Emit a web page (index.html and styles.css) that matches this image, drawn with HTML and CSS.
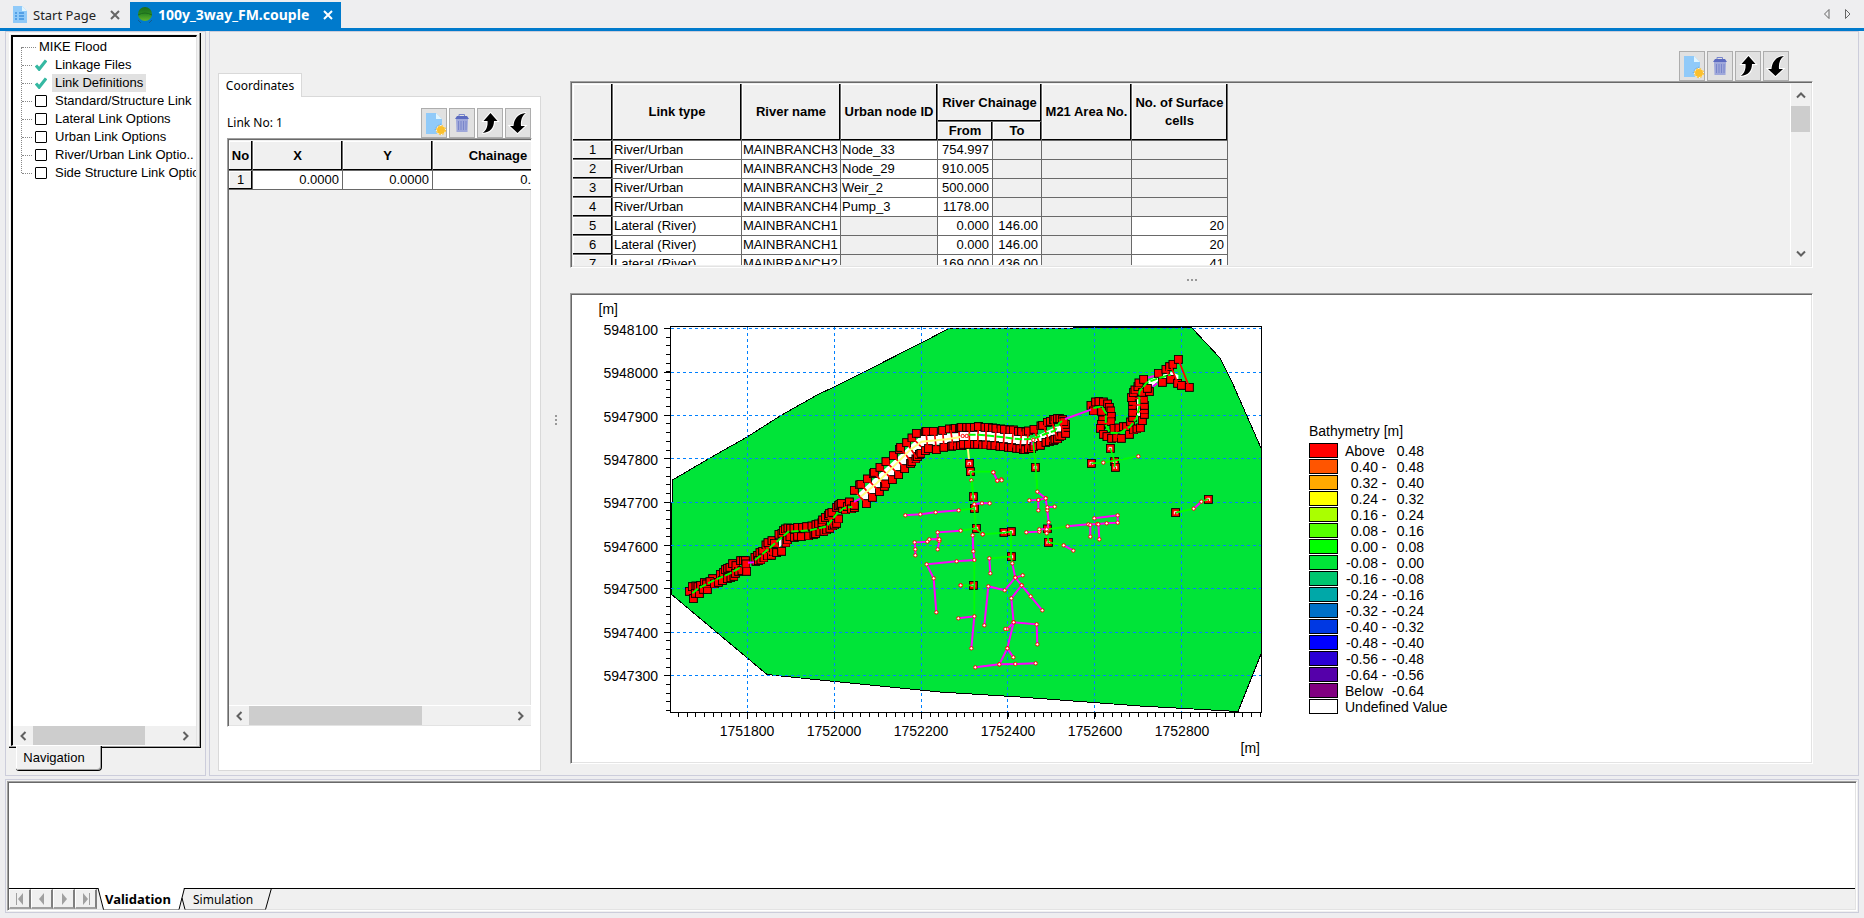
FILE: index.html
```html
<!DOCTYPE html>
<html lang="en">
<head>
<meta charset="utf-8">
<title>100y_3way_FM.couple</title>
<link rel="stylesheet" href="styles.css">
</head>
<body>
<svg class="sprites" aria-hidden="true">
  <symbol id="i-new" viewBox="1 1 24 28">
    <path d="M5 5H15L21 11V26H5Z" fill="#90caf9"/><path d="M15 5L21 11H15Z" fill="#e1f5fe"/>
    <circle cx="20" cy="22" r="5" fill="#fff" stroke="#cfd8dc" stroke-dasharray="1 1"/>
    <circle cx="20" cy="22" r="4" fill="#fbc02d"/><circle cx="20" cy="22" r="4.6" fill="none" stroke="#fbc02d" stroke-dasharray="2 1.6"/>
    <path d="M14 22l2-4 4-2" fill="none" stroke="#64a5dc" stroke-dasharray="1 1"/>
  </symbol>
  <symbol id="i-bin" viewBox="1 1 24 28">
    <path d="M10 8V6.500H15.500V8" fill="none" stroke="#7986cb"/><path d="M6 11L8 8H18L20 11Z" fill="#5c6bc0"/>
    <path d="M7 11H19L18.500 24H7.500Z" fill="#9fa8da"/><path d="M9.500 13V22M12 13V22M14.500 13V22M17 13V22" stroke="#7986cb"/>
  </symbol>
  <symbol id="i-up" viewBox="1 1 24 28">
    <path d="M13.500 5L20.500 13H17C17 19.500 13.500 24.500 5.500 25C9.500 22.500 11 18 10.500 13H6.500Z" stroke="#fff" stroke-width="2"/>
    <path d="M13.500 5L20.500 13H17C17 19.500 13.500 24.500 5.500 25C9.500 22.500 11 18 10.500 13H6.500Z"/>
  </symbol>
  <symbol id="i-down" viewBox="1 1 24 28">
    <path d="M12.500 25L20 18H16C15.500 12 17 7.500 21 5C13 5.500 9 11 8.500 18H5Z" stroke="#fff" stroke-width="2"/>
    <path d="M12.500 25L20 18H16C15.500 12 17 7.500 21 5C13 5.500 9 11 8.500 18H5Z"/>
  </symbol>
  <symbol id="i-check" viewBox="0 0 13 13"><path d="M1 7L4.500 11L12 1.500" fill="none" stroke="#35b8a2" stroke-width="3.500"/></symbol>
  <symbol id="i-x" viewBox="0 0 10 10"><path d="M1 1L9 9M9 1L1 9" fill="none" stroke="currentColor" stroke-width="2"/></symbol>
  <symbol id="a-left" viewBox="0 0 8 10"><path d="M6.500 1L2.500 5L6.500 9" fill="none" stroke="#606060" stroke-width="2"/></symbol>
  <symbol id="a-right" viewBox="0 0 8 10"><path d="M1.500 1L5.500 5L1.500 9" fill="none" stroke="#606060" stroke-width="2"/></symbol>
  <symbol id="a-up" viewBox="0 0 10 8"><path d="M1 6.500L5 2.500L9 6.500" fill="none" stroke="#606060" stroke-width="2"/></symbol>
  <symbol id="a-down" viewBox="0 0 10 8"><path d="M1 1.500L5 5.500L9 1.500" fill="none" stroke="#606060" stroke-width="2"/></symbol>
</svg>

<header class="doc-tabs">
  <div class="doc-tab">
    <svg class="doc-icon" viewBox="0 0 16 18"><path d="M1 0H10L15 5V17H1Z" fill="#90caf9"/><path d="M10 0V5H15Z" fill="#e1f5fe"/><path d="M3 7H5M3 10H5M3 13H5M7 7H12M7 10H12M7 13H12" stroke="#1976d2"/></svg>
    <button class="doc-name">Start Page</button>
    <button class="doc-close" aria-label="Close Start Page"><svg><use href="#i-x"/></svg></button>
  </div>
  <div class="doc-tab doc-tab-active">
    <svg class="doc-icon" viewBox="0 0 16 18"><defs><linearGradient id="ball" x2="0" y2="1"><stop offset="0" stop-color="#1d6b1c"/><stop offset=".5" stop-color="#2c8a22"/><stop offset="1" stop-color="#62b52c"/></linearGradient></defs><circle cx="8" cy="8" r="7" fill="url(#ball)"/><path d="M1 9Q8 5 15 9" stroke="#1c691d" fill="none"/><path d="M1 14L4 17M15 14L12 17" stroke="#155b8c"/></svg>
    <button class="doc-name">100y_3way_FM.couple</button>
    <button class="doc-close" aria-label="Close 100y_3way_FM.couple"><svg><use href="#i-x"/></svg></button>
  </div>
  <div class="doc-scroll">
    <button aria-label="Previous tab"><svg viewBox="0 0 8 12"><path d="M6 1.500V10.500L1.500 6Z"/></svg></button>
    <button aria-label="Next tab"><svg viewBox="0 0 8 12"><path d="M1.500 1.500V10.500L6 6Z"/></svg></button>
  </div>
</header>

<div class="workspace">
  <aside class="panel nav">
    <div class="nav-page">
      <div class="nav-box">
        <ul class="tree">
          <li class="tree-root">MIKE Flood</li>
          <li><svg class="check"><use href="#i-check"/></svg><span>Linkage Files</span></li>
          <li><svg class="check"><use href="#i-check"/></svg><span class="selected">Link Definitions</span></li>
          <li><input type="checkbox" id="c1"><label for="c1">Standard/Structure Link</label></li>
          <li><input type="checkbox" id="c2"><label for="c2">Lateral Link Options</label></li>
          <li><input type="checkbox" id="c3"><label for="c3">Urban Link Options</label></li>
          <li><input type="checkbox" id="c4"><label for="c4">River/Urban Link Optio..</label></li>
          <li><input type="checkbox" id="c5"><label for="c5">Side Structure Link Options</label></li>
        </ul>
        <div class="hscroll"><button aria-label="Scroll left"><svg><use href="#a-left"/></svg></button><div class="track"><div class="thumb nav-thumb"></div></div><button aria-label="Scroll right"><svg><use href="#a-right"/></svg></button></div>
      </div>
    </div>
    <button class="nav-tab">Navigation</button>
  </aside>

  <main class="panel editor">
    <section class="coords">
      <button class="coords-tab">Coordinates</button>
      <div class="coords-page">
        <div class="coords-head">
          <span>Link No: 1</span>
          <div class="tools">
            <button aria-label="New"><svg><use href="#i-new"/></svg></button><button aria-label="Delete"><svg><use href="#i-bin"/></svg></button><button aria-label="Move up"><svg><use href="#i-up"/></svg></button><button aria-label="Move down"><svg><use href="#i-down"/></svg></button>
          </div>
        </div>
        <div class="sunken coords-grid">
          <div class="clip">
            <table class="grid coords-table">
              <colgroup><col class="w24"><col class="w90"><col class="w90"><col class="w131"></colgroup>
              <thead><tr><th>No</th><th>X</th><th>Y</th><th>Chainage</th></tr></thead>
              <tbody><tr><th>1</th><td class="num">0.0000</td><td class="num">0.0000</td><td class="num">0.0000</td></tr></tbody>
            </table>
          </div>
          <div class="hscroll"><button aria-label="Scroll left"><svg><use href="#a-left"/></svg></button><div class="track"><div class="thumb coords-thumb"></div></div><button aria-label="Scroll right"><svg><use href="#a-right"/></svg></button></div>
        </div>
      </div>
    </section>

    <div class="vsplit"><i></i><i></i><i></i></div>

    <section class="links">
      <div class="tools links-tools">
        <button aria-label="New link"><svg><use href="#i-new"/></svg></button><button aria-label="Delete link"><svg><use href="#i-bin"/></svg></button><button aria-label="Move link up"><svg><use href="#i-up"/></svg></button><button aria-label="Move link down"><svg><use href="#i-down"/></svg></button>
      </div>
      <div class="sunken links-grid">
        <div class="clip">
          <table class="grid links-table">
            <colgroup><col class="w40"><col class="w129"><col class="w99"><col class="w97"><col class="w55"><col class="w49"><col class="w90"><col class="w96"></colgroup>
            <thead>
              <tr class="h-top"><th rowspan="2"></th><th rowspan="2">Link type</th><th rowspan="2">River name</th><th rowspan="2">Urban node ID</th><th colspan="2">River Chainage</th><th rowspan="2">M21 Area No.</th><th rowspan="2">No. of Surface<br>cells</th></tr>
              <tr class="h-sub"><th>From</th><th>To</th></tr>
            </thead>
            <tbody>
              <tr><th>1</th><td>River/Urban</td><td>MAINBRANCH3</td><td>Node_33</td><td class="num">754.997</td><td class="off"></td><td class="off"></td><td class="off"></td></tr>
              <tr><th>2</th><td>River/Urban</td><td>MAINBRANCH3</td><td>Node_29</td><td class="num">910.005</td><td class="off"></td><td class="off"></td><td class="off"></td></tr>
              <tr><th>3</th><td>River/Urban</td><td>MAINBRANCH3</td><td>Weir_2</td><td class="num">500.000</td><td class="off"></td><td class="off"></td><td class="off"></td></tr>
              <tr><th>4</th><td>River/Urban</td><td>MAINBRANCH4</td><td>Pump_3</td><td class="num">1178.00</td><td class="off"></td><td class="off"></td><td class="off"></td></tr>
              <tr><th>5</th><td>Lateral (River)</td><td>MAINBRANCH1</td><td class="off"></td><td class="num">0.000</td><td class="num">146.00</td><td class="off"></td><td class="num">20</td></tr>
              <tr><th>6</th><td>Lateral (River)</td><td>MAINBRANCH1</td><td class="off"></td><td class="num">0.000</td><td class="num">146.00</td><td class="off"></td><td class="num">20</td></tr>
              <tr><th>7</th><td>Lateral (River)</td><td>MAINBRANCH2</td><td class="off"></td><td class="num">169.000</td><td class="num">436.00</td><td class="off"></td><td class="num">41</td></tr>
            </tbody>
          </table>
        </div>
        <div class="vscroll"><button aria-label="Scroll up"><svg><use href="#a-up"/></svg></button><div class="track"><div class="thumb links-thumb"></div></div><button aria-label="Scroll down"><svg><use href="#a-down"/></svg></button></div>
      </div>
      <div class="hsplit"><i></i><i></i><i></i></div>
      <div class="sunken map">
        <svg class="plot" viewBox="572 295 700 466" role="img" aria-label="Bathymetry map">
          <defs>
            <marker id="sq" markerUnits="userSpaceOnUse" markerWidth="27" markerHeight="27" viewBox="-13.500 -13.500 27 27"><rect x="-12" y="-12" width="24" height="24" fill="#f00" stroke="#000" stroke-width="3"/></marker>
            <marker id="sqn" markerUnits="userSpaceOnUse" markerWidth="27" markerHeight="27" viewBox="-13.500 -13.500 27 27"><rect x="-12" y="-12" width="24" height="24" fill="#f00" stroke="#000" stroke-width="3"/><path d="M-4 5V-3H4V5" fill="none" stroke="#fff" stroke-width="3"/></marker>
            <marker id="nd" markerUnits="userSpaceOnUse" markerWidth="15" markerHeight="15" viewBox="-7.500 -7.500 15 15"><circle r="5" fill="#fff" stroke="#f00" stroke-width="3"/></marker>
          </defs>
          <path class="mesh" d="M672.500 480L710 458L747 437L780 416L817 395L834 387L862 373L921 343L949 328.500H1073V327H1187L1192 328L1220 358L1232 382L1261 448V654L1238 711.500L1140 706L1020 697L940 692L860 684L810 679L767 674.500L671 594V502H672.500Z"/>
          <path class="gridline" d="M671 328.500H1261M671 372.500H1261M671 415.500H1261M671 458.500H1261M671 502.500H1261M671 545.500H1261M671 588.500H1261M671 632.500H1261M671 675.500H1261M747.500 327V712M834.500 327V712M921.500 327V712M1007.500 327V712M1094.500 327V712M1181.500 327V712"/>
          <g transform="translate(660 310) scale(.33333)">
            <path class="water" d="M590 555L785 375L975 365V400L800 405L700 500L625 575ZM340 690L375 670L372 700L350 718Z"/>
            <path class="sq" d="M88 844L97 830L108 828L100 866L106 850L118 851L114 830L122 826L133 818L130 838L142 839L140 822L158 806L150 815L163 822L175 817L181 793L190 788L187 812L196 779L203 775L202 806L210 772L213 803L222 799L218 761L228 767L226 790L236 784L242 752L250 752L256 752L246 782L260 784L258 762L288 754L285 742L293 736L295 752L303 750L300 728L308 724L312 744L318 705L322 738L327 716L334 736L324 698L340 726L336 692L343 700L350 728L365 724L357 673L366 670L378 699L370 662L376 657L382 690L384 654L392 655L390 680L403 682L402 655L413 652L413 679L428 652L424 680L440 650L446 678L456 648L462 673L468 644L467 671L476 642L480 666L486 638L492 664L488 630L500 660L496 622L505 616L510 655L508 611L516 607L518 648L524 645L518 632L530 640L536 627L530 592L535 587L540 583L548 596L556 600L544 580L562 590L568 576L574 597L583 593L583 586"/>
            <path class="sq" d="M583 541L599 525L603 523L622 507L640 491L643 487L660 472L678 455L700 437L718 418L722 412L740 398L756 384L769 370L796 366L800 364L820 364L848 361L868 357L882 357L886 355L898 355L902 354L920 353L932 352L955 349M619 581L637 562L658 545L673 529L677 522L697 509L716 494L734 476L752 460L756 455L768 447L772 440L778 433L783 430L796 422L805 416L829 419L852 412L875 409L879 408L892 408L905 408L918 402L928 392L952 403"/>
            <path class="link" d="M583 541L619 581M603 523L637 562M622 507L658 545M643 490L677 527M660 472L697 509M678 455L716 494M700 437L734 476M722 414L755 457M740 398L770 443M758 384L783 410M798 364L803 416M823 364L829 419M848 361L852 412M872 360L879 408M896 356L901 408M918 353L928 392M953 349V403M310 715L335 735M340 690L356 712M225 765L236 784M505 620L515 650"/>
            <path class="river" d="M97 850L115 835L160 812L210 790L245 770M285 750L310 730L345 700L385 665L450 661L500 649L530 612L550 595L577 590"/>
            <path class="pipe" d="M264 758L282 757M582 576L600 566"/>
            <path class="cream" d="M602 560L650 520L700 470L750 420L785 395L860 388L920 378L928 460"/>
          </g>
          <g transform="translate(960 310) scale(.33333)">
            <path class="water" d="M0 360L150 365L215 385L300 345L315 365L215 405L0 395ZM560 215L590 200L635 186L655 195V212L600 208L575 230ZM524 265H546V310L520 340L500 358L490 350L522 320Z"/>
            <path class="pipe" d="M563 203L582 198M578 230L592 220"/>
            <path class="sq" d="M5 352L20 352L30 352L43 352L55 350L75 352L85 352L98 354L108 355L123 357L133 358L150 360L160 360L175 364L185 365L198 366L205 363L222 358L243 348L248 346L262 337L271 334L280 328L285 328L292 326L300 326L308 329M2 407L10 403L25 403L43 403L53 403L68 405L78 405L93 406L105 407L120 409L130 410L145 412L155 413L170 415L180 416L190 419L195 419L205 416L215 416L222 410L241 406L258 397L268 395L280 392L285 388L293 387L300 380L305 378L317 370L318 352L316 343L312 335"/>
            <path class="sq" d="M393 286L400 303L407 276L417 275L430 276L443 282L448 292L453 303L454 319L453 335L425 304L428 330L424 343L421 355L430 373L441 380L455 385L462 355L470 384L477 354L484 385L490 350L500 350L508 373L520 360L512 336L531 357L541 354L518 322L547 332L518 307L553 313L517 286L553 300L553 286L518 274L514 263L552 268L520 248L525 240L534 230L537 219L551 208L548 247L568 245L562 235L595 190L607 217L618 178L629 170L632 208L639 163L655 148L653 220L664 226L688 232"/>
            <path class="link" d="M28 352V403M55 350L53 403M78 352V405M108 355L105 407M133 358L130 410M160 360L155 413M185 365L180 416M205 363L200 416M222 358L241 406M250 346L268 395M275 334L293 387M298 326L310 370M655 148L688 232M632 166L653 220M618 178L632 208M432 320H462M430 340H455M515 265H552M518 285H553M518 305H553M470 355V384"/>
            <path class="river" d="M25 374H55L90 377L130 382L180 388L218 387L255 372L285 362L297 340L310 330M400 294L425 290L438 310L437 345L450 368L480 369L510 350L530 325L538 290V245L560 218L600 203L632 194"/>
            <path class="pipe" d="M315 327L393 299M217 392V405"/>
            <path class="sqn" d="M28 460L31 485L226 472L394 460L451 415L464 455L466 472"/>
            <path class="drain" d="M31 485H100M31 485L35 511L40 555M219 390L227 472L232 544M394 460L430 458L464 452L535 439M451 415L464 455V472"/>
            <path class="pipe" d="M100 487L112 512L124 508"/>
            <path class="nd" d="M8 378H20M220 390M100 487L112 512L124 508M34 511M430 458L535 439M100 487"/>
          </g>
          <g transform="translate(860 480) scale(.33333)">
            <path class="sqn" d="M340 50L343 85L349 145L432 157L454 155L454 230L340 316L562 147L565 187L947 98L1045 58"/>
            <path class="drain" d="M335 2L343 85L348 145L368 163L435 158L453 155V230L457 250M296 91L343 85M302 152L348 145M343 240V409M302 316H340M388 235L453 230M531 0L532 35M562 148L565 187L611 196M562 148L623 139M947 98L1001 86M1024 65L1045 57"/>
            <path class="pipe nd" d="M136 106L181 103L227 97L296 91"/>
            <path class="pipe nd" d="M343 73L366 70L389 70"/>
            <path class="pipe nd" d="M302 152L233 157V178L238 183L233 208"/>
            <path class="pipe nd" d="M238 178H208L202 185L164 187L166 208V226"/>
            <path class="pipe nd" d="M338 166L340 214L343 240L290 244L200 253L221 295L229 397"/>
            <path class="pipe nd" d="M334 505L343 409L295 415"/>
            <path class="pipe nd" d="M457 250L466 293L488 286"/>
            <path class="pipe nd" d="M466 293L434 331L385 319L373 436"/>
            <path class="pipe nd" d="M466 293L485 316L512 349L547 391"/>
            <path class="pipe nd" d="M485 316L454 355L461 427L530 433L532 493"/>
            <path class="pipe nd" d="M461 427L442 447H436"/>
            <path class="pipe nd" d="M461 427L442 505L418 553L346 562"/>
            <path class="pipe nd" d="M442 505L460 532"/>
            <path class="pipe nd" d="M418 553L466 552L527 550"/>
            <path class="pipe nd" d="M388 235L391 280"/>
            <path class="pipe nd" d="M532 35L557 55L562 91L566 127L560 160"/>
            <path class="pipe nd" d="M508 61L535 60L557 55"/>
            <path class="pipe nd" d="M535 60V91"/>
            <path class="pipe nd" d="M562 82L584 80"/>
            <path class="pipe nd" d="M499 157L538 155V148L560 148"/>
            <path class="pipe nd" d="M611 196L640 212"/>
            <path class="pipe nd" d="M623 139L685 133L712 132L740 130L773 128V106L703 115"/>
            <path class="pipe nd" d="M691 135V170"/>
            <path class="pipe nd" d="M715 133L718 178"/>
            <path class="pipe nd" d="M1001 86L1024 65"/>
            <path class="nd" d="M302 316L302 316M368 163L368 163M412 2L425 1"/>
          </g>
          <path class="axis" d="M670.500 326.500H1261.500V712.500H670.500ZM664 328.500H670M664 372.500H670M664 415.500H670M664 458.500H670M664 502.500H670M664 545.500H670M664 588.500H670M664 632.500H670M664 675.500H670M747.500 713V719M834.500 713V719M921.500 713V719M1007.500 713V719M1094.500 713V719M1181.500 713V719"/>
          <path class="ticks" d="M668 328V712"/>
          <path class="ticks" d="M678 715H1262"/>
          <g class="labels-y"><text x="658" y="335">5948100</text><text x="658" y="378">5948000</text><text x="658" y="422">5947900</text><text x="658" y="465">5947800</text><text x="658" y="508">5947700</text><text x="658" y="552">5947600</text><text x="658" y="594">5947500</text><text x="658" y="638">5947400</text><text x="658" y="681">5947300</text><text x="618" y="314">[m]</text><text x="1260" y="753">[m]</text></g>
          <g class="labels-x"><text x="747" y="736">1751800</text><text x="834" y="736">1752000</text><text x="921" y="736">1752200</text><text x="1008" y="736">1752400</text><text x="1095" y="736">1752600</text><text x="1182" y="736">1752800</text></g>
        </svg>
        <div class="legend">
          <h2>Bathymetry [m]</h2>
          <ul>
            <li><b class="k1"></b><span class="wide">Above</span><span>0.48</span></li>
            <li><b class="k2"></b><span>0.40</span><i>-</i><span>0.48</span></li>
            <li><b class="k3"></b><span>0.32</span><i>-</i><span>0.40</span></li>
            <li><b class="k4"></b><span>0.24</span><i>-</i><span>0.32</span></li>
            <li><b class="k5"></b><span>0.16</span><i>-</i><span>0.24</span></li>
            <li><b class="k6"></b><span>0.08</span><i>-</i><span>0.16</span></li>
            <li><b class="k7"></b><span>0.00</span><i>-</i><span>0.08</span></li>
            <li><b class="k8"></b><span>-0.08</span><i>-</i><span>0.00</span></li>
            <li><b class="k9"></b><span>-0.16</span><i>-</i><span>-0.08</span></li>
            <li><b class="k10"></b><span>-0.24</span><i>-</i><span>-0.16</span></li>
            <li><b class="k11"></b><span>-0.32</span><i>-</i><span>-0.24</span></li>
            <li><b class="k12"></b><span>-0.40</span><i>-</i><span>-0.32</span></li>
            <li><b class="k13"></b><span>-0.48</span><i>-</i><span>-0.40</span></li>
            <li><b class="k14"></b><span>-0.56</span><i>-</i><span>-0.48</span></li>
            <li><b class="k15"></b><span>-0.64</span><i>-</i><span>-0.56</span></li>
            <li><b class="k16"></b><span class="wide">Below</span><span>-0.64</span></li>
            <li><b class="k17"></b><span class="full">Undefined Value</span></li>
          </ul>
        </div>
      </div>
    </section>
  </main>
</div>

<section class="panel output">
  <div class="sunken output-box">
    <div class="output-area"></div>
    <div class="sheet-bar">
      <div class="sheet-nav">
        <button aria-label="First sheet"><svg viewBox="0 0 10 12"><path d="M1 0H2V12H1ZM8 0V12L3 6Z"/></svg></button>
        <button aria-label="Previous sheet"><svg viewBox="0 0 10 12"><path d="M7 0V12L2 6Z"/></svg></button>
        <button aria-label="Next sheet"><svg viewBox="0 0 10 12"><path d="M3 0V12L8 6Z"/></svg></button>
        <button aria-label="Last sheet"><svg viewBox="0 0 10 12"><path d="M2 0V12L7 6ZM8 0H9V12H8Z"/></svg></button>
      </div>
      <div class="sheets">
        <svg class="sheet-shape" viewBox="0 0 176 22" aria-hidden="true"><path d="M1 0L6 21H82L87 0Z" fill="#fff" stroke="none"/><path d="M6 21.500H82M88 21.500H168" stroke="#a0a0a0"/><path d="M1 0L6.500 21.500M82 21.500L87.500 0M85 10L88 21.500M174.500 0L168.500 21.500M87 .5H176" stroke="#000" fill="none"/></svg>
        <button class="sheet sheet-active">Validation</button>
        <button class="sheet">Simulation</button>
      </div>
    </div>
  </div>
</section>
</body>
</html>
```
FILE: styles.css
```css
* { box-sizing: border-box; }
body {
  margin: 0;
  min-height: 100vh;
  display: flex;
  flex-direction: column;
  background: #eeeef0;
  color: #000;
  font: 13px/18px "Liberation Sans", Arial, sans-serif;
}
button { font: inherit; color: inherit; border: 0; padding: 0; background: none; }
ul { list-style: none; margin: 0; padding: 0; }
.sprites { display: none; }

/* document tabs */
.doc-tabs {
  display: flex;
  align-items: flex-end;
  height: 31px;
  border-bottom: 3px solid #007acc;
  font: 13px/24px "Noto Sans", "Open Sans", sans-serif;
}
.doc-tab { display: flex; align-items: center; height: 26px; padding: 0 10px 0 12px; color: #222; }
.doc-tab-active { background: #007acc; color: #fff; font-size: 14px; font-weight: bold; padding: 0 8px 0 7px; }
.doc-icon { width: 16px; height: 18px; margin-right: 5px; }
.doc-name { white-space: nowrap; }
.doc-close { display: flex; margin-left: 14px; color: #666; }
.doc-tab-active .doc-close { color: #fff; }
.doc-close svg { width: 10px; height: 10px; }
.doc-scroll { display: flex; gap: 13px; margin: 0 12px 0 auto; height: 20px; }
.doc-scroll svg { display: block; width: 8px; height: 12px; margin-bottom: 8px; fill: none; stroke: #666; }

/* panels */
.workspace { flex: 1; display: flex; gap: 3px; padding: 0 5px; }
.panel { border: 1px solid #cccddb; background: #f0f0f0; }
.sunken {
  border: 1px solid;
  border-color: #a0a0a0 #fff #fff #a0a0a0;
  box-shadow: inset 1px 1px #696969, inset -1px -1px #e3e3e3;
  padding: 2px;
}

/* navigation */
.nav { width: 201px; display: flex; flex-direction: column; align-items: flex-start; padding: 1px 4px 4px 3px; }
.nav-page {
  flex: 1;
  display: flex;
  width: 192px;
  padding: 2px 3px 1px 2px;
  border: solid #000;
  border-width: 0 1px 1px 0;
  box-shadow: inset -1px -1px #a0a0a0, inset 1px 1px #fff;
}
.nav-box {
  flex: 1;
  min-width: 0;
  display: flex;
  flex-direction: column;
  background: #fff;
  border: solid;
  border-width: 2px 1px 1px 2px;
  border-color: #000 #e3e3e3 #fff #000;
}
.tree { flex: 1; overflow: hidden; position: relative; padding-top: 1px; }
.tree::before { content: ""; position: absolute; left: 8px; top: 10px; height: 126px; border-left: 1px dotted #888; }
.tree li { display: flex; align-items: center; height: 18px; white-space: nowrap; }
.tree li::before { content: ""; flex: none; width: 10px; margin: 1px 3px 0 9px; border-top: 1px dotted #888; }
.tree .tree-root::before { width: 14px; margin-right: 3px; }
.tree input { appearance: none; flex: none; width: 12px; height: 12px; margin: 0; border: 1px solid #000; border-radius: 1px; }
.tree .check { flex: none; width: 12px; height: 12px; }
.tree span, .tree label { margin-left: 5px; padding: 0 3px; }
.tree .selected { background: #e1e1e1; }
.nav-tab {
  margin-left: 7px;
  width: 86px;
  height: 25px;
  padding-right: 9px;
  border: solid #000;
  border-width: 0 1px 1px 0;
  border-radius: 0 0 4px 3px;
  box-shadow: inset 1px 0 #fff, inset -1px -1px #a0a0a0;
  background: #f0f0f0;
  margin-top: -2px;
}

/* scroll bars */
.hscroll { display: flex; height: 19px; flex: none; background: #f0f0f0; }
.vscroll { display: flex; flex-direction: column; width: 19px; flex: none; background: #f0f0f0; box-shadow: -1px 0 #fff; }
.track { flex: 1; }
.thumb { background: #cdcdcd; }
.hscroll button { width: 20px; display: grid; place-items: center; }
.vscroll button { height: 22px; display: grid; place-items: center; }
.hscroll svg { width: 8px; height: 10px; }
.vscroll svg { width: 10px; height: 8px; }
.hscroll .thumb { height: 100%; }
.nav-thumb { width: 78%; }
.coords-thumb { width: 66%; }
.links-thumb { height: 26px; }

/* editor */
.editor { flex: 1; min-width: 0; display: flex; padding: 0 45px 4px 8px; }
.coords { width: 323px; padding-top: 41px; display: flex; flex-direction: column; align-items: flex-start; font: 12px/18px "Noto Sans", sans-serif; }
.coords-tab {
  width: 84px;
  height: 24px;
  background: #fff;
  border: 1px solid #d9d9d9;
  border-bottom: 0;
  margin-bottom: -1px;
  z-index: 1;
}
.coords-page { flex: 1; width: 100%; display: flex; flex-direction: column; padding: 11px 8px 43px; background: #fff; border: 1px solid #d9d9d9; }
.coords-head { display: flex; justify-content: space-between; align-items: center; padding-right: 1px; }
.tools { display: flex; gap: 2px; }
.tools button { width: 26px; height: 30px; border: 1px solid #adadad; background: #e1e1e1; }
.tools svg { display: block; width: 24px; height: 28px; }
.coords-grid { flex: 1; display: flex; flex-direction: column; background: #f0f0f0; padding: 2px 0 1px 1px; }
.coords-grid .clip { flex: 1; border-bottom: 1px solid #fff; }
.clip { overflow: hidden; min-width: 0; }
.vsplit { width: 29px; padding-top: 37px; display: flex; flex-direction: column; align-items: center; justify-content: center; gap: 2px; }
.vsplit i, .hsplit i { width: 2px; height: 2px; background: #999; }
.hsplit { height: 25px; padding-bottom: 2px; display: flex; align-items: center; justify-content: center; gap: 2px; }

/* data grids */
.grid { table-layout: fixed; border-collapse: separate; border-spacing: 0; font: 13px/18px "Liberation Sans", Arial, sans-serif; }
.grid th, .grid td { height: 19px; padding: 0 1px; border: solid #696969; border-width: 0 1px 1px 0; white-space: nowrap; overflow: hidden; }
.grid th { background: #f0f0f0; padding: 0; box-shadow: inset -1px -1px #000, inset 1px 1px #fff; }
.grid tbody th { font-weight: normal; }
.grid td { background: #fff; text-align: left; }
.grid td.num { text-align: right; padding-right: 3px; }
.grid td.off { background: #f0f0f0; }
.coords-table { width: 335px; }
.coords-table thead th { height: 30px; }
.links-table { width: 655px; }
.links-table .h-top th { height: 38px; }
.links-table .h-sub th { height: 19px; }
.w24 { width: 24px; }
.w40 { width: 40px; }
.w49 { width: 49px; }
.w55 { width: 55px; }
.w90 { width: 90px; }
.w96 { width: 96px; }
.w97 { width: 97px; }
.w99 { width: 99px; }
.w129 { width: 129px; }
.w131 { width: 131px; }
.links { flex: 1; min-width: 0; display: flex; flex-direction: column; padding: 19px 0 7px; }
.links-tools { justify-content: flex-end; padding-right: 24px; }
.links-grid { display: flex; justify-content: space-between; height: 187px; }

/* map */
.map { flex: 1; display: flex; background: #fff; overflow: hidden; padding: 1px; }
.plot { flex: none; width: 700px; height: 466px; }
.plot path { fill: none; }
.plot .mesh { fill: #00e438; stroke: #000; shape-rendering: crispEdges; }
.plot .water { fill: #fff; }
.plot .sq { marker: url(#sq); }
.plot .sqn { marker: url(#sqn); }
.plot .nd { marker: url(#nd); }
.plot .link { stroke: #f00; stroke-width: 5; }
.plot .river { stroke: #0f0; stroke-width: 6; stroke-dasharray: 22 6; }
.plot .cream { stroke: #ffff80; stroke-width: 6; }
.plot .drain { stroke: #0f0; stroke-width: 5; }
.plot .pipe { stroke: #f0f; stroke-width: 6; }
.plot .gridline { stroke: #0080ff; stroke-dasharray: 3 3; shape-rendering: crispEdges; }
.plot .axis { stroke: #000; shape-rendering: crispEdges; }
.plot .ticks { stroke: #000; stroke-width: 4; stroke-dasharray: 1 7.680; shape-rendering: crispEdges; }
.plot text { font-size: 14px; }
.labels-y { text-anchor: end; }
.labels-x { text-anchor: middle; }
.legend { padding: 128px 0 0 37px; font-size: 14px; line-height: 16px; white-space: nowrap; }
.legend h2 { margin: 0 0 4px; font: inherit; }
.legend li { display: grid; grid-template-columns: 36px 33px 12px 34px; height: 16px; text-align: right; }
.legend b { width: 29px; height: 15px; border: 1px solid #000; }
.legend i { font-style: normal; text-align: center; }
.legend .wide { grid-column: 2 / 4; text-align: left; }
.legend .full { grid-column: 2 / 5; text-align: left; }
.k1 { background: #f00; }
.k2 { background: #f50; }
.k3 { background: #fa0; }
.k4 { background: #ff0; }
.k5 { background: #af0; }
.k6 { background: #5f0; }
.k7 { background: #0f0; }
.k8 { background: #00e438; }
.k9 { background: #00c66f; }
.k10 { background: #00a8a8; }
.k11 { background: #0070c6; }
.k12 { background: #0038e3; }
.k13 { background: #00f; }
.k14 { background: #2a00d5; }
.k15 { background: #50a; }
.k16 { background: #800080; }
.k17 { background: #fff; }

/* output */
.output { margin: 3px 5px 5px; padding: 1px; }
.output-box { padding: 1px; }
.output-area { height: 105px; background: #fff; }
.sheet-bar { display: flex; height: 21px; border-top: 1px solid #000; font: 12px/19px "Noto Sans", sans-serif; }
.sheet-nav { display: flex; }
.sheet-nav button { width: 22px; display: grid; place-items: center; border: solid; border-width: 1px 2px 2px 1px; border-color: #fff #808080 #a0a0a0 #fff; }
.sheet-nav svg { width: 10px; height: 12px; fill: #a0a0a0; }
.sheets { position: relative; display: flex; }
.sheet-shape { position: absolute; left: 0; top: -1px; width: 176px; height: 22px; }
.sheet { position: relative; padding-left: 12px; }
.sheet-active { width: 84px; padding-left: 8px; font-size: 13px; font-weight: bold; text-align: left; }
```
